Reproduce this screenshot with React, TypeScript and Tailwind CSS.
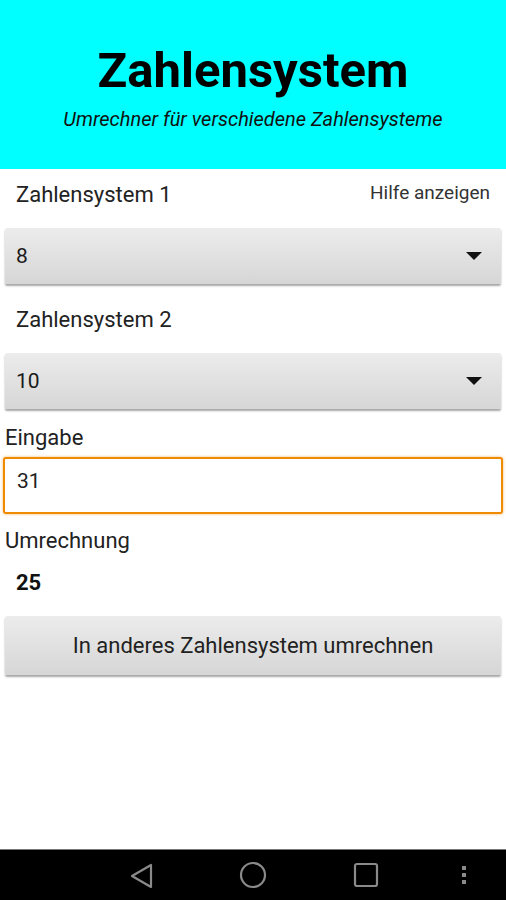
import React from "react";

function Spinner({ value }: { value: string }) {
  return (
    <div className="mx-[5px] flex h-[56px] items-center justify-between rounded-[2px] bg-gradient-to-b from-[#ececec] to-[#d6d6d6] pl-[11px] pr-[18px] shadow-[0_2px_2px_rgba(0,0,0,0.35)]">
      <span className="text-[21px] leading-none text-[#1a1a1a]">{value}</span>
      <svg width="18" height="10" viewBox="0 0 18 10">
        <path d="M1 1h16L9 9z" fill="#111" />
      </svg>
    </div>
  );
}

export default function App() {
  return (
    <div
      className="flex min-h-[900px] flex-col bg-white"
      style={{ fontFamily: "Roboto, 'Noto Sans', sans-serif" }}
    >
      <header className="flex h-[169px] flex-col items-center bg-[#00ffff] pt-[46px]">
        <h1 className="text-[49px] font-bold leading-none text-black">Zahlensystem</h1>
        <p className="mt-[14px] text-[20px] italic leading-none text-[#111]">
          Umrechner für verschiedene Zahlensysteme
        </p>
      </header>

      <div className="flex items-start justify-between pl-[16px] pr-[16px] pt-[15px]">
        <span className="text-[22px] leading-none text-[#222]">Zahlensystem 1</span>
        <span className="-mt-[1px] text-[19px] leading-none text-[#333]">Hilfe anzeigen</span>
      </div>
      <div className="mt-[22px]">
        <Spinner value="8" />
      </div>

      <div className="pl-[16px] pt-[25px] text-[22px] leading-none text-[#222]">Zahlensystem 2</div>
      <div className="mt-[22px]">
        <Spinner value="10" />
      </div>

      <div className="pl-[5px] pt-[18px] text-[22px] leading-none text-[#222]">Eingabe</div>
      <div className="mx-[3px] mt-[8px] flex h-[57px] items-start rounded-[3px] border-2 border-[#f08a00] bg-white pl-[12px] pt-[12px] text-[21px] leading-none text-[#222] shadow-[0_0_3px_rgba(240,138,0,0.6)]">
        31
      </div>

      <div className="pl-[5px] pt-[16px] text-[22px] leading-none text-[#222]">Umrechnung</div>
      <div className="pl-[16px] pt-[20px] text-[22px] font-bold leading-none text-[#111]">25</div>

      <button className="mx-[5px] mt-[22px] h-[59px] rounded-[2px] bg-gradient-to-b from-[#ececec] to-[#d6d6d6] text-[22px] leading-none text-[#222] shadow-[0_2px_2px_rgba(0,0,0,0.35)]">
        In anderes Zahlensystem umrechnen
      </button>

      <nav className="mt-auto flex h-[51px] items-center border-t border-[#777] bg-black">
        <div className="relative h-full w-full">
          <svg className="absolute left-[129px] top-[12px]" width="26" height="28" viewBox="0 0 26 28">
            <path d="M22 3v22L3 14z" fill="none" stroke="#8a8a8a" strokeWidth="2.2" strokeLinejoin="round" />
          </svg>
          <svg className="absolute left-[239px] top-[11px]" width="28" height="28" viewBox="0 0 28 28">
            <circle cx="14" cy="14" r="12" fill="none" stroke="#8a8a8a" strokeWidth="2.2" />
          </svg>
          <svg className="absolute left-[353px] top-[12px]" width="26" height="26" viewBox="0 0 26 26">
            <rect x="2" y="2" width="22" height="22" rx="2" fill="none" stroke="#8a8a8a" strokeWidth="2.2" />
          </svg>
          <svg className="absolute left-[461px] top-[15px]" width="6" height="20" viewBox="0 0 6 20">
            <rect x="1" y="1" width="4" height="4" fill="#8a8a8a" />
            <rect x="1" y="8" width="4" height="4" fill="#8a8a8a" />
            <rect x="1" y="15" width="4" height="4" fill="#8a8a8a" />
          </svg>
        </div>
      </nav>
    </div>
  );
}
